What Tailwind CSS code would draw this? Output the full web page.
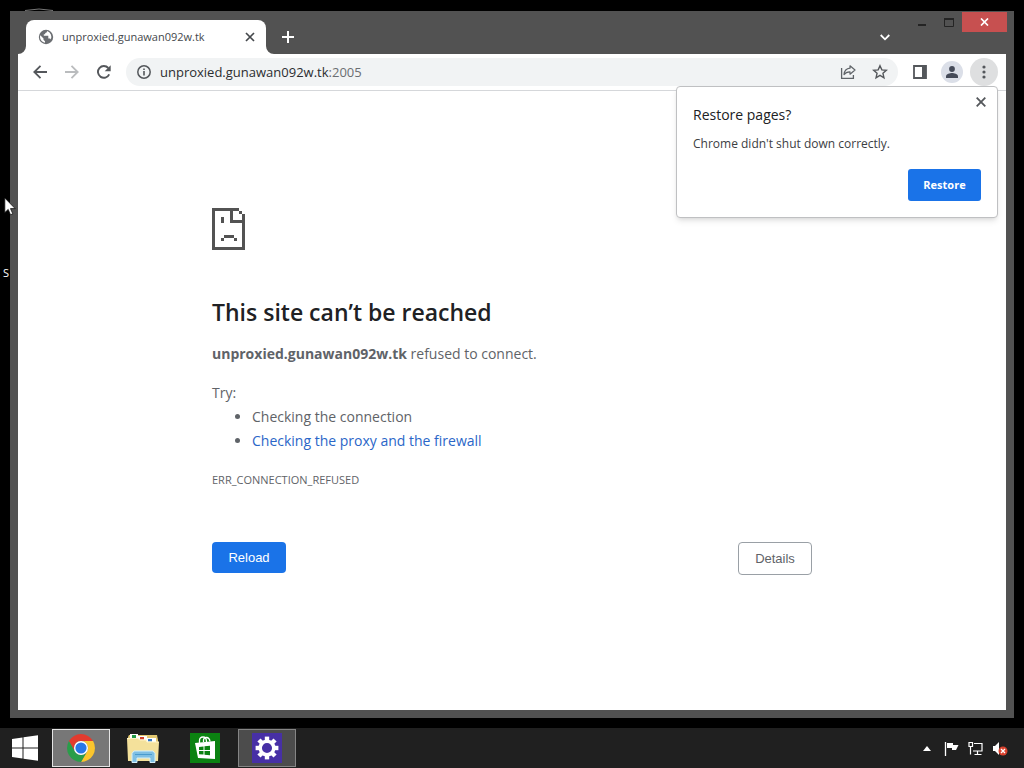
<!DOCTYPE html>
<html lang="en">
<head>
<meta charset="utf-8">
<meta name="viewport" content="width=device-width, initial-scale=1">
<title>unproxied.gunawan092w.tk</title>
<script src="https://cdn.jsdelivr.net/npm/@tailwindcss/browser@4"></script>
</head>
<body class="flex h-screen flex-col overflow-hidden bg-black font-['Segoe_UI','Open_Sans',sans-serif] text-[#202124]">
<!-- Desktop -->
<div class="relative flex min-h-0 flex-1 flex-col px-[10px] pt-[11px] pb-[10px]">
  <svg class="absolute top-[8px] left-[24px]" width="30" height="4" viewBox="0 0 30 4" aria-hidden="true"><path d="M1 2.500Q15-.5 29 2.500" fill="none" stroke="#777"/></svg>
  <span class="absolute top-[265px] left-[3px] text-[11px] leading-4 text-white">S</span>

  <!-- Browser window -->
  <section class="relative flex min-h-0 flex-1 flex-col bg-[#525252] px-2 pb-2">
    <header class="flex h-[43px] shrink-0 items-end">
      <div class="relative ml-2 flex h-[34px] w-[240px] items-center rounded-t-lg bg-white px-3">
        <svg class="absolute bottom-0 -left-2" width="8" height="8" aria-hidden="true"><path d="M8 0v8H0a8 8 0 0 0 8-8z" fill="#fff"/></svg>
        <svg class="absolute -right-2 bottom-0" width="8" height="8" aria-hidden="true"><path d="M0 0v8h8a8 8 0 0 1-8-8z" fill="#fff"/></svg>
        <svg width="16" height="16" viewBox="0 0 16 16" aria-hidden="true"><circle cx="8" cy="8" r="7.200" fill="#6b6e72"/><path d="M2.300 6.200l3.200 3.300v1.300l1.500 1.400v1.600C4.100 13.200 2 10.900 2 8c0-.6.100-1.200.3-1.800zM9 2.100c.1 1.300-.6 1.800-1.800 1.900v1.300H5.800v1.500h4.500v2.600h1.200c.7 0 1.100.5 1.300 1.100A6 6 0 0 0 9 2.100z" fill="#fff"/></svg>
        <span class="ml-2 flex-1 text-[11px] whitespace-nowrap text-[#45484c]">unproxied.gunawan092w.tk</span>
        <button aria-label="Close tab" class="-mr-1 flex size-4 items-center justify-center"><svg width="10" height="10" viewBox="0 0 10 10"><path d="M1 1l8 8M9 1L1 9" stroke="#45484c" stroke-width="1.700"/></svg></button>
      </div>
      <button aria-label="New tab" class="mb-[7px] ml-3 flex size-5 items-center justify-center"><svg width="12" height="12" viewBox="0 0 12 12"><path d="M6 0v12M0 6h12" stroke="#fff" stroke-width="2"/></svg></button>
      <div class="flex-1"></div>
      <button aria-label="Search tabs" class="mr-[13px] mb-[7px] flex size-5 items-center justify-center"><svg width="10" height="7" viewBox="0 0 10 7"><path d="M.7 1L5 5.300 9.300 1" fill="none" stroke="#fff" stroke-width="1.800"/></svg></button>
      <div class="mt-px -mr-px flex h-[20px] self-start">
        <button aria-label="Minimize" class="flex w-[27px] items-center justify-center pt-[5px]"><svg width="8" height="2"><path d="M0 0h8v2H0z" fill="#242424"/></svg></button>
        <button aria-label="Maximize" class="flex w-[27px] items-center justify-center"><svg width="10" height="9" viewBox="0 0 10 9"><path d="M.5 1v7.500h9V1M0 1h10" fill="none" stroke="#242424"/><path d="M0 0h10v2H0z" fill="#242424"/></svg></button>
        <button aria-label="Close" class="flex w-[45px] items-center justify-center bg-[#c75050]"><svg width="9" height="8" viewBox="0 0 9 8"><path d="M1 .5l7 7M8 .5l-7 7" stroke="#fff" stroke-width="1.700"/></svg></button>
      </div>
    </header>

    <nav class="flex h-[37px] shrink-0 items-center border-b border-[#d5d7da] bg-white pr-2 pl-3" aria-label="Browser toolbar">
      <button aria-label="Back" class="flex size-5 items-center justify-center"><svg width="14" height="14" viewBox="0 0 14 14"><path d="M14 7H1.500M7.500.8L1.300 7l6.200 6.200" fill="none" stroke="#54575b" stroke-width="1.800"/></svg></button>
      <button aria-label="Forward" class="ml-3 flex size-5 items-center justify-center"><svg width="14" height="14" viewBox="0 0 14 14"><path d="M0 7h12.500M6.500.8L12.700 7l-6.200 6.200" fill="none" stroke="#babcbe" stroke-width="1.800"/></svg></button>
      <button aria-label="Reload page" class="ml-3 flex size-5 items-center justify-center"><svg width="14" height="14" viewBox="0 0 14 14"><path d="M12.200 9.400A5.900 5.900 0 1 1 11.300 3" fill="none" stroke="#54575b" stroke-width="1.900"/><path d="M13.700.2v6H7.700z" fill="#54575b"/></svg></button>
      <div class="mr-3 ml-3 flex h-7 flex-1 items-center rounded-full bg-[#f1f3f4] pr-2 pl-[11px]">
        <svg width="14" height="14" viewBox="0 0 14 14" aria-hidden="true"><circle cx="7" cy="7" r="6.200" fill="none" stroke="#54575b" stroke-width="1.500"/><path d="M6.200 6h1.600v4.500H6.200zM6.200 3.400h1.600V5H6.200z" fill="#54575b"/></svg>
        <div class="ml-[9px] flex-1 text-[13px] leading-5 text-[#2b2d30]" role="textbox" aria-label="Address" tabindex="0">unproxied.gunawan092w.tk<span class="text-[#6b6e72]">:2005</span></div>
        <button aria-label="Share" class="flex size-5 items-center justify-center"><svg width="16" height="16" viewBox="0 0 16 16"><path d="M1.600 4v10.400h11.800V11" fill="none" stroke="#5f6368" stroke-width="1.300"/><path d="M10 1.800l5 4.200-5 4.200V7.800C7 7.700 5.400 8.600 4 10.600 4.300 7.200 6.500 4.600 10 4.200z" fill="none" stroke="#5f6368" stroke-width="1.200" stroke-linejoin="round"/></svg></button>
        <button aria-label="Bookmark this page" class="ml-3 flex size-5 items-center justify-center"><svg width="16" height="16" viewBox="0 0 16 16"><path d="M8 1.700l1.850 4.150 4.500.45-3.400 3 1 4.450L8 11.400l-3.950 2.350 1-4.450-3.400-3 4.500-.45z" fill="none" stroke="#54575b" stroke-width="1.400"/></svg></button>
      </div>
      <button aria-label="Side panel" class="flex size-5 items-center justify-center"><svg width="14" height="14" viewBox="0 0 14 14"><path d="M1 1h12v12H1z" fill="none" stroke="#54575b" stroke-width="1.800"/><path d="M9 1h4v12H9z" fill="#54575b"/></svg></button>
      <button aria-label="Profile" class="ml-[11px] flex size-[22px] items-center justify-center rounded-full bg-[#dbdfe8]"><svg width="12" height="12" viewBox="0 0 12 12" fill="#454b59"><circle cx="6" cy="3" r="2.900"/><path d="M0 12v-1.800C0 8 4 7 6 7s6 1 6 3.200V12z"/></svg></button>
      <button aria-label="Menu" class="ml-[7px] flex size-7 items-center justify-center rounded-full bg-[#dedfe0]"><svg width="4" height="14" viewBox="0 0 4 14" fill="#54575b"><circle cx="2" cy="2" r="1.600"/><circle cx="2" cy="7" r="1.600"/><circle cx="2" cy="12" r="1.600"/></svg></button>
    </nav>

    <main class="min-h-0 flex-1 overflow-hidden bg-white text-[14px] leading-6 text-[#5f6368]">
      <div class="mx-auto max-w-[600px] pt-[117px]">
        <svg width="33" height="42" viewBox="0 0 33 42" fill="#535353" shape-rendering="crispEdges" role="img" aria-label="Page unavailable"><path d="M0 0h27v3H3v36h27V15H18V3h3v9h9V6h3v36H0zM27 3h3v3h-3zM9 9h3v6H9zM12 27h10v3H12zM9 30h3v3H9zM22 30h3v3h-3z"/></svg>
        <h1 class="mt-[46px] text-[23px] leading-8 font-semibold text-[#202124]">This site can’t be reached</h1>
        <p class="mt-[14px]"><strong class="font-bold">unproxied.gunawan092w.tk</strong> refused to connect.</p>
        <p class="mt-[15px]">Try:</p>
        <ul class="list-disc pl-10">
          <li>Checking the connection</li>
          <li><a href="#" class="text-[#2a66c8]">Checking the proxy and the firewall</a></li>
        </ul>
        <p class="mt-[15px] text-[11px]">ERR_CONNECTION_REFUSED</p>
        <div class="mt-[50px] flex items-start justify-between font-['Liberation_Sans',sans-serif] text-[13px]">
          <button class="h-[31px] w-[74px] rounded bg-[#1a73e8] text-white">Reload</button>
          <button class="h-[33px] w-[74px] rounded border border-[#9aa0a6] text-[#5f6368]">Details</button>
        </div>
      </div>
    </main>

    <!-- Restore bubble -->
    <aside class="absolute top-[75px] right-4 flex w-[322px] flex-col rounded border border-[#bfc0c2] bg-white px-4 pt-[17px] pb-4 shadow-md" role="dialog" aria-labelledby="restore-title">
      <button aria-label="Dismiss" class="absolute top-[7px] right-2 flex size-4 items-center justify-center"><svg width="10" height="10" viewBox="0 0 10 10"><path d="M.7.700l8.600 8.600M9.300.7L.7 9.300" stroke="#54575b" stroke-width="1.800"/></svg></button>
      <h2 id="restore-title" class="text-[14px] leading-[22px]">Restore pages?</h2>
      <p class="mt-2 text-[12px] leading-5 text-[#3c4043]">Chrome didn't shut down correctly.</p>
      <button class="mt-[15px] h-8 w-[73px] self-end rounded-[3px] bg-[#1a73e8] text-[11px] font-bold text-white">Restore</button>
    </aside>
  </section>

  <!-- Mouse pointer -->
  <svg class="absolute top-[197px] left-[4px]" width="13" height="20" viewBox="0 0 13 20" aria-hidden="true"><path d="M.8 1v14.600l3.400-3.200 2.300 5.400 2.300-1-2.300-5.200h4.700z" fill="#fff" stroke="#111" stroke-width=".8"/></svg>
</div>

<!-- Taskbar -->
<footer class="flex h-10 shrink-0 items-center bg-[#202020]">
  <button aria-label="Start" class="flex h-10 w-[52px] items-center justify-start pl-3"><svg width="26" height="26" viewBox="0 0 26 26" fill="#fff"><path d="M0 4l10.500-1.500v10H0zM11.500 2.300L26 .200v12.300H11.500zM0 13.500h10.500v10L0 22zM11.500 13.500H26v12.300l-14.500-2.100z"/></svg></button>
  <button aria-label="Google Chrome" class="flex h-[38px] w-[58px] items-center justify-center border border-[#e4e4e4] bg-[#777]">
    <svg width="28" height="30" viewBox="0 0 28 30"><path d="M14 8h12.100A14 14 0 0 1 14 29l6.100-10.500A7 7 0 0 0 14 8z" fill="#fbc52d"/><path d="M1.900 8A14 14 0 0 1 26.100 8H14a7 7 0 0 0-6.100 10.500z" fill="#e33b2e"/><path d="M1.900 8l6 10.500a7 7 0 0 0 12.200 0L14 29A14 14 0 0 1 1.900 8z" fill="#2a9d4a"/><circle cx="14" cy="15" r="7" fill="#fff"/><circle cx="14" cy="15" r="5.600" fill="#2877e8"/></svg>
  </button>
  <button aria-label="File Explorer" class="ml-4 flex h-10 w-[34px] items-center justify-center">
    <svg width="32" height="30" viewBox="0 0 32 30"><path d="M1 28V4l1-2h28l1 5v21z" fill="#e2c872"/><path d="M3 1h8v5H3zM11 3h9v4h-9zM19 5h10v4H19z" fill="#fff"/><path d="M5 2h4v3H5z" fill="#249b47"/><path d="M13 4h4v2.500h-4z" fill="#cf412d"/><path d="M21 6h4v2.500h-4z" fill="#3278c8"/><path d="M0 5.500h11l2 1.500h6l1 2h12l-1 19H1z" fill="#f4e19b"/><path d="M0 5.500h11l2 1.500h6l1 2h12" fill="none" stroke="#fff4c6"/><path d="M5 29.500v-9l2-2.500h19l2 2.500v9h-5V25H10v4.500z" fill="#7fbfe3" stroke="#d4f0fb"/><path d="M8 21.500h17" stroke="#4a9bcd"/></svg>
  </button>
  <button aria-label="Store" class="ml-[30px] flex size-[30px] items-center justify-center bg-[#0b8211]">
    <svg width="24" height="26" viewBox="0 0 24 26"><path d="M2 8l20-2v18L5 23z" fill="#fff"/><path d="M6.500 8V5.500q0-3.500 3.500-3.500t3.500 5M10.500 7V5q.5-3 3.500-2.500Q16.500 3 17 6.500" fill="none" stroke="#fff" stroke-width="1.300"/><path d="M6 12l4.500-.5V15H6zM11.500 11.300l5.500-.6V15h-5.500zM6 16h4.500v3.600L6 19.200zM11.500 16H17v4.300l-5.500-.6z" fill="#0b8211"/></svg>
  </button>
  <button aria-label="Settings" class="ml-[18px] flex h-[38px] w-[58px] items-center justify-center border border-[#858585] bg-[#4c4c4c]">
    <span class="flex size-[30px] items-center justify-center bg-[#4730a5]"><svg width="24" height="24" viewBox="-12 -12 24 24"><circle r="6.800" fill="none" stroke="#fff" stroke-width="3.500"/><g fill="#fff"><path id="cog" d="M-2.200-11.400h4.400v4h-4.400z"/><use href="#cog" transform="rotate(45)"/><use href="#cog" transform="rotate(90)"/><use href="#cog" transform="rotate(135)"/><use href="#cog" transform="rotate(180)"/><use href="#cog" transform="rotate(225)"/><use href="#cog" transform="rotate(270)"/><use href="#cog" transform="rotate(315)"/></g></svg></span>
  </button>
  <div class="flex-1"></div>
  <div class="flex items-center gap-[9px] pr-4">
    <button aria-label="Show hidden icons" class="mr-1"><svg width="8" height="5" viewBox="0 0 8 5"><path d="M4 0l4 5H0z" fill="#fff"/></svg></button>
    <button aria-label="Action Center"><svg width="15" height="15" viewBox="0 0 15 15"><path d="M1.500 1v14" stroke="#fff" stroke-width="1.300"/><path d="M3 2h6v2h5.500L12 9H8V7H3z" fill="#fff"/></svg></button>
    <button aria-label="Network"><svg width="15" height="15" viewBox="0 0 15 15" fill="none" stroke="#fff" stroke-width="1.200"><path d="M6 2.500h8v7.500H5M9.500 10v3M6.500 13.500h7M2.500 5.500v8"/><path d="M1 1.500h3.500v4H1z"/></svg></button>
    <button aria-label="Volume muted"><svg width="16" height="15" viewBox="0 0 16 15"><path d="M1 5h2l4-4v13l-4-4H1z" fill="#fff"/><circle cx="11" cy="10" r="4.500" fill="#d9422e"/><path d="M9 8l4 4M13 8l-4 4" stroke="#fff" stroke-width="1.300"/></svg></button>
  </div>
</footer>
</body>
</html>
